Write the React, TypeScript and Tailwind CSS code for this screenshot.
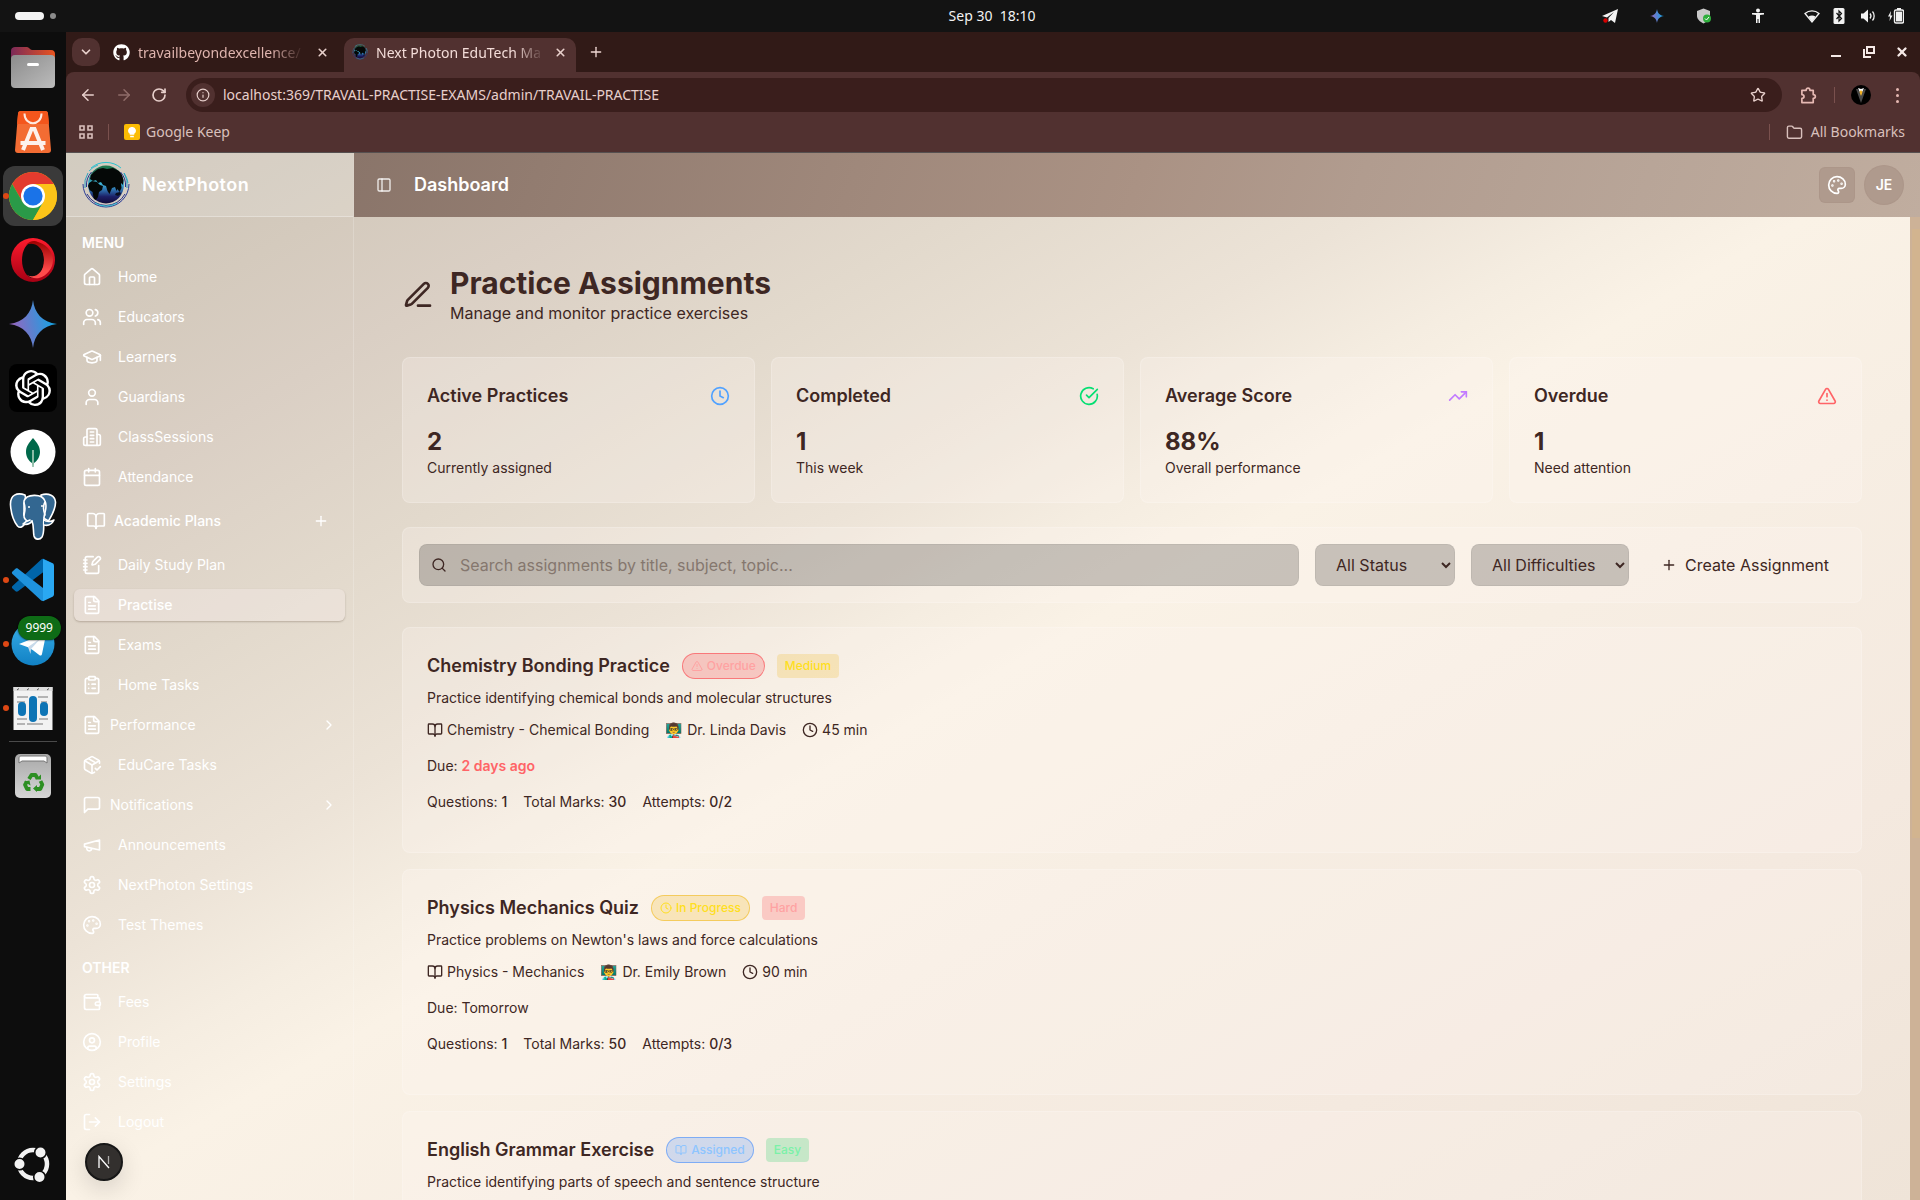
import React from "react";
import {
  House, Users, GraduationCap, User, Calendar, BookOpen, NotebookPen, ClipboardList, PackageCheck,
  Palette, Wallet, CircleUser, LogOut, PanelLeft, Plus, ChevronRight, ChevronDown, Clock,
  CircleCheckBig, TrendingUp, TriangleAlert, Search, ArrowLeft, ArrowRight, RotateCw, X, Info,
  Star, Folder,
} from "lucide-react";
import { FaGithub } from "react-icons/fa";
import { SiOpenai } from "react-icons/si";

type IconProps = { className?: string };
type IconType = React.ComponentType<{ className?: string }>;

/* ---------- line icons ---------- */

function Line({ className, paths, children }: IconProps & { paths: string[]; children?: React.ReactNode }) {
  return (
    <svg viewBox="0 0 24 24" fill="none" stroke="currentColor" strokeWidth="2" strokeLinecap="round" strokeLinejoin="round" className={className} aria-hidden="true">
      {paths.map((d) => <path key={d} d={d} />)}
      {children}
    </svg>
  );
}

const Building = ({ className }: IconProps) => (
  <Line className={className} paths={["M6 22V4a2 2 0 0 1 2-2h8a2 2 0 0 1 2 2v18Z", "M6 12H4a2 2 0 0 0-2 2v6a2 2 0 0 0 2 2h2", "M18 9h2a2 2 0 0 1 2 2v9a2 2 0 0 1-2 2h-2", "M10 6h4", "M10 10h4", "M10 14h4", "M10 18h4"]} />
);
const FileLines = ({ className }: IconProps) => (
  <Line className={className} paths={["M15 2H6a2 2 0 0 0-2 2v16a2 2 0 0 0 2 2h12a2 2 0 0 0 2-2V7Z", "M14 2v4a2 2 0 0 0 2 2h4", "M10 9H8", "M16 13H8", "M16 17H8"]} />
);
const Message = ({ className }: IconProps) => (
  <Line className={className} paths={["M21 15a2 2 0 0 1-2 2H7l-4 4V5a2 2 0 0 1 2-2h14a2 2 0 0 1 2 2z"]} />
);
const Megaphone = ({ className }: IconProps) => (
  <Line className={className} paths={["m3 11 18-5v12L3 14v-3z", "M11.6 16.8a3 3 0 1 1-5.8-1.6"]} />
);
const Gear = ({ className }: IconProps) => (
  <Line className={className} paths={["M12.22 2h-.44a2 2 0 0 0-2 2v.18a2 2 0 0 1-1 1.73l-.43.25a2 2 0 0 1-2 0l-.15-.08a2 2 0 0 0-2.73.73l-.22.38a2 2 0 0 0 .73 2.73l.15.1a2 2 0 0 1 1 1.72v.51a2 2 0 0 1-1 1.74l-.15.09a2 2 0 0 0-.73 2.73l.22.38a2 2 0 0 0 2.73.73l.15-.08a2 2 0 0 1 2 0l.43.25a2 2 0 0 1 1 1.73V20a2 2 0 0 0 2 2h.44a2 2 0 0 0 2-2v-.18a2 2 0 0 1 1-1.73l.43-.25a2 2 0 0 1 2 0l.15.08a2 2 0 0 0 2.73-.73l.22-.39a2 2 0 0 0-.73-2.73l-.15-.08a2 2 0 0 1-1-1.74v-.5a2 2 0 0 1 1-1.74l.15-.09a2 2 0 0 0 .73-2.73l-.22-.38a2 2 0 0 0-2.73-.73l-.15.08a2 2 0 0 1-2 0l-.43-.25a2 2 0 0 1-1-1.73V4a2 2 0 0 0-2-2z"]}>
    <circle cx="12" cy="12" r="3" />
  </Line>
);
const Pen = ({ className }: IconProps) => (
  <Line className={className} paths={["M12 20h9", "M16.376 3.622a1 1 0 0 1 3.002 3.002L7.368 18.635a2 2 0 0 1-.855.506l-2.872.838a.5.5 0 0 1-.62-.62l.838-2.872a2 2 0 0 1 .506-.854z"]} />
);

/* ---------- brand drawings ---------- */

function Spark({ className, id }: IconProps & { id: string }) {
  return (
    <svg viewBox="0 0 48 48" className={className} aria-hidden="true">
      <defs>
        <linearGradient id={id} x1="0" y1="0.6" x2="1" y2="0.4">
          <stop offset="0.1" stopColor="#9168c0" />
          <stop offset="0.5" stopColor="#5684d1" />
          <stop offset="0.9" stopColor="#1ba1e3" />
        </linearGradient>
      </defs>
      <path d="M24 0c1.500 13 9 22 24 24-15 2-22.500 11-24 24-1.500-13-9-22-24-24C15 22 22.500 13 24 0z" fill={`url(#${id})`} />
    </svg>
  );
}

function Globe({ className, id }: IconProps & { id: string }) {
  return (
    <svg viewBox="0 0 48 48" className={className} aria-hidden="true">
      <defs>
        <linearGradient id={id} x1="0" y1="0" x2="0" y2="1">
          <stop offset="0" stopColor="#1f7a4d" />
          <stop offset="0.2" stopColor="#1c6a5a" />
          <stop offset="0.48" stopColor="#3fb4d8" />
          <stop offset="0.68" stopColor="#2a5fa0" />
          <stop offset="0.82" stopColor="#1c1f66" />
          <stop offset="1" stopColor="#120a38" />
        </linearGradient>
      </defs>
      <g fill="none" strokeWidth="1">
        <path d="M9 7A23 23 0 0 1 39 7" stroke="#2cc3cf" />
        <path d="M7 10a22 22 0 0 1 9-6M42 12a22 22 0 0 1 4 10" stroke="#35b7c8" />
        <path d="M1 23a23 23 0 0 0 46 0" stroke="#2a3c96" />
        <path d="M3 27a21.500 21.500 0 0 1 3-15M45 27a21.500 21.500 0 0 0-3-15" stroke="#2d9fc0" />
        <path d="M5 33a21.500 21.500 0 0 0 38 0" stroke="#28308a" />
        <path d="M13 42a21 21 0 0 0 22 0" stroke="#2cc3cf" />
        <path d="M4.500 26a20 20 0 0 1 5-15M43.500 26a20 20 0 0 0-5-15" stroke="#27348c" />
      </g>
      <ellipse cx="24" cy="23.500" rx="18" ry="19" fill={`url(#${id})`} />
      <path d="M12 11l4-3 5-1 4 1 6-1 6 3 3 4 1.500 5-.5 5-2-2 .5 5-2 4-2-3-1 2-1.500-4-3 1-2.500 6-2-3-1.500-5-3-1-2-3-3 1-2-3-3 1-3-2 1-4z" fill="#050807" />
      <path d="M7 22l3-2 5 1 3 3 3 1-1 4-3 2-1 5-2 3-2-1-1.500-7-3-2-1.500-4z" fill="#050807" />
      <path d="M34 32l4-1 1 2-3 2-3-1z" fill="#0a0d20" />
    </svg>
  );
}

const FilesIcon = () => (
  <svg viewBox="0 0 48 48" className="size-12" aria-hidden="true">
    <defs>
      <linearGradient id="fl-back" x1="0" x2="1"><stop offset="0" stopColor="#7b2a58" /><stop offset="1" stopColor="#e9541f" /></linearGradient>
      <linearGradient id="fl-front" x1="0" y1="0" x2="1" y2="1"><stop offset="0" stopColor="#8c8c8c" /><stop offset="1" stopColor="#bcbcbc" /></linearGradient>
    </defs>
    <path d="M2 7c0-3 2-4 4-4h12c2 0 3 3 5 3h19c3 0 4 2 4 4v15H2z" fill="url(#fl-back)" />
    <rect x="2" y="11" width="44" height="33" rx="4" fill="url(#fl-front)" />
    <rect x="18" y="19" width="12" height="3" rx="1.500" fill="#fff" />
  </svg>
);
const SoftwareIcon = () => (
  <svg viewBox="0 0 48 48" className="size-12" aria-hidden="true">
    <path d="M9 6c0-2 1-3 3-3h24c2 0 3 1 3 3l3 36c0 2-1 3-3 3H9c-2 0-3-1-3-3z" fill="#f36c33" />
    <path d="M9 6c0-2 1-3 3-3h24c2 0 3 1 3 3l1 10H8z" fill="#f4561c" />
    <path d="M15.500 5.500c0 13 17 13 17 0" fill="none" stroke="#fde8df" strokeWidth="2" />
    <path d="M14 42l8.500-21h3L34 42M11.500 35h25" fill="none" stroke="#fdf1ec" strokeWidth="4" />
  </svg>
);
const ChromeIcon = () => (
  <svg viewBox="0 0 48 48" className="size-12" aria-hidden="true">
    <circle cx="24" cy="24" r="24" fill="#fbbc05" />
    <path d="M3.220 12A24 24 0 0 1 44.780 12H24L13.600 30z" fill="#e33b2e" />
    <path d="M3.220 12A24 24 0 0 0 24 48l10.400-18H13.600z" fill="#2a9a48" />
    <path d="M44.780 12A24 24 0 0 1 24 48l10.400-18L30 12z" fill="#fcc419" />
    <circle cx="24" cy="24" r="12" fill="#fff" />
    <circle cx="24" cy="24" r="9.600" fill="#1a73e8" />
  </svg>
);
const OperaIcon = () => (
  <svg viewBox="0 0 48 48" className="size-12" aria-hidden="true">
    <defs>
      <linearGradient id="op-a" x1="0" y1="0" x2="0" y2="1"><stop offset="0" stopColor="#ff1b2d" /><stop offset="1" stopColor="#a70014" /></linearGradient>
      <linearGradient id="op-b" x1="0" y1="0" x2="0" y2="1"><stop offset="0" stopColor="#9c0000" /><stop offset="0.800" stopColor="#ff4b4b" /></linearGradient>
    </defs>
    <path fillRule="evenodd" d="M24 2a22 22 0 1 0 0 44 22 22 0 1 0 0-44zm0 4c6 0 11 8 11 18s-5 18-11 18-11-8-11-18S18 6 24 6z" fill="url(#op-a)" />
    <path d="M17 9c3-3.500 8-5 12-3 9 3 15 10 15 18s-6 16-14 18c-4 1-9-.5-12-3 8 4 17-2 17-15S25 5 17 9z" fill="url(#op-b)" />
  </svg>
);
const OpenAiIcon = () => (
  <span className="flex size-12 items-center justify-center rounded-lg bg-black text-white"><SiOpenai className="size-9" /></span>
);
const MongoIcon = () => (
  <svg viewBox="0 0 48 48" className="size-12" aria-hidden="true">
    <circle cx="24" cy="24" r="22.500" fill="#fff" />
    <path d="M24 10c4 5 7 8 7 14 0 5-3 9-6 11l-.5 4h-1L23 35c-3-2-6-6-6-11 0-6 3-9 7-14z" fill="#00684a" />
    <path d="M24 22v17" stroke="#b8d6c4" strokeWidth="1.500" />
  </svg>
);
const PostgresIcon = () => (
  <svg viewBox="0 0 48 48" className="size-12" stroke="#fff" strokeWidth="1.600" strokeLinejoin="round" strokeLinecap="round" aria-hidden="true">
    <path d="M16 3C8 0 1 3 1.500 13c.5 7 3 16 7 21 3 3 6 0 8-3l4-6z" fill="#336791" />
    <path d="M32 3c8-2.500 14 1 14.500 7 .3 7-4 14-7 19l-7-4z" fill="#336791" />
    <path d="M15 9c2-7 18-8 21 0 3 6-1 12-1 17-1 6 1 14-2 19-2 3-7 3-8-1-1-5 0-10-2-15-6 2-9-3-8-9z" fill="#336791" />
    <path d="M23 29c-2 3-5 4-9 3 2-2 3-3 7-4M35 28c2 2 7 2 10 0-2 4-6 6-10 5" fill="#336791" />
    <path d="M15 11c2 5 1 8 0 12M36 10c-3 5-1 10 0 13" fill="none" />
    <circle cx="20" cy="15" r="1" fill="#fff" stroke="none" />
    <circle cx="33" cy="14" r="1" fill="#fff" stroke="none" />
  </svg>
);
const CodeIcon = () => (
  <svg viewBox="0 0 48 48" className="size-12" aria-hidden="true">
    <path d="M3.500 32.500l3 2.700c.8.6 1.700.6 2.500 0L45 8 35 3c-1-.5-2-.3-2.800.5L3.500 30c-.8.800-.8 1.700 0 2.500z" fill="#0065a9" />
    <path d="M3.500 15.500l3-2.700c.8-.6 1.700-.6 2.500 0L34 32v13c-.7.300-1.300 0-1.800-.4L3.500 18c-.8-.8-.8-1.700 0-2.500z" fill="#1f93dd" />
    <path d="M34 3l9.500 4.300c.9.500 1.500 1.300 1.500 2.400v28.600c0 1.100-.6 1.900-1.500 2.400L34 45.300z" fill="#2aa8f2" />
  </svg>
);
const TelegramIcon = () => (
  <svg viewBox="0 0 48 48" className="size-12" aria-hidden="true">
    <defs><linearGradient id="tg" x1="0" y1="0" x2="0" y2="1"><stop offset="0" stopColor="#38aee8" /><stop offset="1" stopColor="#1181c4" /></linearGradient></defs>
    <circle cx="24" cy="24" r="21.500" fill="url(#tg)" />
    <path d="M10 24l25-10c1.500-.5 2 .3 1.700 2L33 34c-.4 1.500-1.300 1.800-2.500 1.200l-6.500-5-5-3z" fill="#fff" />
    <path d="M19 27l13-9-10 11-.5 5z" fill="#c8daea" />
  </svg>
);
const ChartPaperIcon = () => (
  <svg viewBox="0 0 48 48" className="size-12" aria-hidden="true">
    <rect x="4.500" y="3" width="39" height="43" fill="#f2f2f2" />
    <path d="M4.500 3h39v4h-39z" fill="#dcdcdc" />
    <path d="M8 6l2-1.500M18 6l2-1.500M28 6l2-1.500M38 6l2-1.500" stroke="#555" />
    <g stroke="#b4b4b4" strokeWidth="2"><path d="M8 13h11M29 13h10M8 18h8M32 18h6M8 35h10M30 35h9M8 40h8M18 40h16" /></g>
    <rect x="9" y="18" width="8" height="14" rx="4" fill="#0d74b5" />
    <rect x="20" y="12" width="8" height="26" rx="4" fill="#0d74b5" />
    <rect x="31" y="18" width="8" height="14" rx="4" fill="#0d74b5" />
  </svg>
);
const TrashIcon = () => (
  <svg viewBox="0 0 48 48" className="size-12" aria-hidden="true">
    <defs><linearGradient id="tr" x1="0" y1="0" x2="0" y2="1"><stop offset="0" stopColor="#a8a8a8" /><stop offset="1" stopColor="#d6d6d6" /></linearGradient></defs>
    <rect x="6" y="2" width="36" height="44" rx="5" fill="url(#tr)" />
    <path d="M10 11V6c0-1 1-2 2-2h24c1 0 2 1 2 2v5l-3-2H13z" fill="#fff" stroke="#777" strokeWidth="1" />
    <g fill="none" stroke="#2c8f22" strokeWidth="3.800" strokeLinejoin="round">
      <path d="M20 27l2.500-4h4l2 3.500M31.500 29l1.800 3.500-2 4.500h-4.500M21.500 37H18l-2-4.200 2-3.300" />
    </g>
    <path d="M26.500 27.500h5.500V22.500zM28 33v7l-4-3.500zM15 29.500l5.500-1 1 5z" fill="#2c8f22" />
  </svg>
);
const UbuntuIcon = () => (
  <svg viewBox="0 0 48 48" className="size-12" aria-hidden="true">
    <circle cx="24" cy="24" r="14" fill="none" stroke="#f2f2f2" strokeWidth="4.500" />
    <g fill="#f2f2f2" stroke="#0d0d0d" strokeWidth="1.600">
      <circle cx="10.500" cy="24" r="5.800" /><circle cx="31.500" cy="12.500" r="5.800" /><circle cx="30.500" cy="37" r="5.800" />
    </g>
  </svg>
);

/* ---------- desktop ---------- */

function TopBar() {
  return (
    <header className="flex h-8 shrink-0 items-center bg-[#131313] text-[#f2f2f2]">
      <button aria-label="Workspaces" className="flex w-20 items-center gap-[6px] pl-[15px]">
        <span className="h-2 w-[29px] rounded-full bg-[#f4f4f4]" />
        <span className="size-[6px] rounded-full bg-[#8c8c8c]" />
      </button>
      <div className="flex flex-1 basis-0 justify-end" />
      <button className="pb-[2px] font-['Noto_Sans','Open_Sans',sans-serif] text-[14px] whitespace-pre">Sep 30  18:10</button>
      <div className="flex flex-1 basis-0 items-center justify-end pr-4">
        <svg viewBox="0 0 16 16" className="mr-8 size-4" aria-hidden="true"><path d="M0 8L16 1l-3 14-4-3-2.500 2V10L12 4 5 9.500z" fill="#f2f2f2" /><circle cx="3.500" cy="12.500" r="2.200" fill="#d40000" /></svg>
        <Spark className="mr-8 size-[14px]" id="spark-tray" />
        <svg viewBox="0 0 16 16" className="mr-[38px] size-4" aria-hidden="true"><path d="M1 3l6.500-2.500L14 3v5c0 3-3 6-6.500 7.500C4 14 1 11 1 8z" fill="#c9c9c9" /><circle cx="11" cy="10.500" r="4" fill="#2eae3c" /><path d="M9 10.500l1.500 1.500L13 9" fill="none" stroke="#fff" /></svg>
        <svg viewBox="0 0 16 16" className="mr-[38px] size-4" fill="#f2f2f2" aria-hidden="true"><circle cx="8" cy="2.500" r="2" /><path d="M2 5h12v1.500l-4 .5v8H8.500v-4h-1v4H6V7l-4-.5z" /></svg>
        <svg viewBox="0 0 16 16" className="mr-[11px] size-4" aria-hidden="true"><path d="M1 5.500C5 2 11 2 15 5.500L8 14z" fill="none" stroke="#f2f2f2" strokeWidth="1.300" /><path d="M4.500 8.500c2-1.500 5-1.500 7 0L8 14z" fill="#f2f2f2" /></svg>
        <svg viewBox="0 0 16 16" className="mr-[13px] size-4" aria-hidden="true"><rect x="2.500" width="11" height="16" rx="1.500" fill="#f2f2f2" /><path d="M5.500 5l5 5.500L8 13V3l2.500 2.500-5 5.500" fill="none" stroke="#131313" strokeWidth="1.200" /></svg>
        <svg viewBox="0 0 16 16" className="mr-3 size-4" aria-hidden="true"><path d="M1 5.500h2.500L8 1.500v13L3.500 10.500H1z" fill="#f2f2f2" /><path d="M10 5.500c1.200 1.500 1.200 3.500 0 5M12.500 3.500c2.200 2.500 2.200 6.500 0 9" fill="none" stroke="#f2f2f2" strokeWidth="1.300" /></svg>
        <svg viewBox="0 0 16 16" className="size-4" aria-hidden="true"><path d="M3 3L0 8.500h2L1.500 13l3-5.500h-2z" fill="#f2f2f2" /><rect x="6.500" y="2" width="9" height="13" rx="1.500" fill="none" stroke="#f2f2f2" strokeWidth="1.400" /><rect x="8" y="3.600" width="6" height="9.800" fill="#f2f2f2" /><path d="M9 0h4v2H9z" fill="#f2f2f2" /></svg>
      </div>
    </header>
  );
}

const dockApps: { name: string; icon: React.ReactNode; running?: boolean; active?: boolean; badge?: string }[] = [
  { name: "Files", icon: <FilesIcon /> },
  { name: "App Center", icon: <SoftwareIcon /> },
  { name: "Chrome", icon: <ChromeIcon />, running: true, active: true },
  { name: "Opera", icon: <OperaIcon /> },
  { name: "Gemini", icon: <Spark className="size-12" id="spark-dock" /> },
  { name: "ChatGPT", icon: <OpenAiIcon /> },
  { name: "MongoDB Compass", icon: <MongoIcon /> },
  { name: "pgAdmin", icon: <PostgresIcon /> },
  { name: "Visual Studio Code", icon: <CodeIcon />, running: true },
  { name: "Telegram", icon: <TelegramIcon />, running: true, badge: "9999" },
  { name: "Planner", icon: <ChartPaperIcon />, running: true },
];

function Dock() {
  return (
    <nav aria-label="Dock" className="flex w-[66px] shrink-0 flex-col items-center bg-[#0d0d0d] pt-1 pb-1">
      {dockApps.map((a) => (
        <button key={a.name} aria-label={a.name} className="relative flex h-16 w-full items-center justify-center">
          <span className={a.active ? "flex size-[60px] items-center justify-center rounded-xl bg-[#3a3a3a]" : "flex size-[60px] items-center justify-center"}>{a.icon}</span>
          {a.running && <span className="absolute top-[29px] left-[3px] size-[6px] rounded-full bg-[#dd4814]" />}
          {a.badge && (
            <span className="absolute top-1 right-[5px] rounded-full bg-[#0e6b16] px-2 font-['Noto_Sans','Open_Sans',sans-serif] text-[12px] leading-6 text-white shadow-[0_0_2px_#000]">{a.badge}</span>
          )}
        </button>
      ))}
      <span className="mt-px h-px w-12 bg-[#4a4a4a]" />
      <button aria-label="Trash" className="flex h-[68px] w-full items-center justify-center"><TrashIcon /></button>
      <button aria-label="Show Applications" className="mt-auto flex h-16 w-full items-center justify-center"><UbuntuIcon /></button>
    </nav>
  );
}

/* ---------- browser window ---------- */

function BrowserChrome() {
  return (
    <div className="shrink-0 bg-[#311a17] font-['Noto_Sans','Open_Sans',sans-serif] text-[14px] text-[#e8d0cc]">
      <div className="flex h-10 items-end pl-[6px]">
        <button aria-label="Search tabs" className="mb-[6px] flex size-7 items-center justify-center rounded-[10px] bg-[#513130]"><ChevronDown className="size-[14px]" strokeWidth={3} /></button>
        <div className="flex h-[34px] w-[244px] items-center pr-[14px] pb-[6px] pl-[13px]">
          <FaGithub className="mr-2 size-[17px] shrink-0 text-white" />
          <span className="flex-1 whitespace-nowrap text-[#dfb4ae] [mask-image:linear-gradient(to_right,#000_80%,transparent)]">travailbeyondexcellence/</span>
          <button aria-label="Close tab" className="ml-[10px] flex w-4 justify-center"><X className="size-[13px]" strokeWidth={3} /></button>
        </div>
        <div className="flex h-[34px] w-[232px] items-center rounded-t-[10px] bg-[#513130] pr-2 pb-[6px] pl-2">
          <Globe className="mr-2 size-4 shrink-0" id="globe-tab" />
          <span className="flex-1 whitespace-nowrap text-[#f3dcd8] [mask-image:linear-gradient(to_right,#000_82%,transparent)]">Next Photon EduTech Ma</span>
          <button aria-label="Close tab" className="ml-2 flex w-4 justify-center"><X className="size-[13px]" strokeWidth={3} /></button>
        </div>
        <button aria-label="New tab" className="mb-3 ml-3 text-[#f0d8d4]"><Plus className="size-4" /></button>
        <div className="mb-[13px] ml-auto flex items-center gap-5 pr-[11px] text-[#f5e9e7]">
          <button aria-label="Minimize" className="flex h-[10px] w-3 items-end"><span className="h-[2px] w-[10px] bg-current" /></button>
          <button aria-label="Restore"><svg viewBox="0 0 12 12" className="size-3" fill="none" stroke="currentColor" strokeWidth="2"><path d="M4 1h7v6H4zM1 3v8h7" /></svg></button>
          <button aria-label="Close window"><X className="size-[14px]" strokeWidth={4} /></button>
        </div>
      </div>
      <div className="rounded-t-lg border-b border-[#565050] bg-[#513130]">
        <div className="flex h-[46px] items-center pl-[13px]">
          <button aria-label="Back" className="mr-[18px]"><ArrowLeft className="size-[18px]" /></button>
          <button aria-label="Forward" className="mr-[18px] text-[#8f6c69]"><ArrowRight className="size-[18px]" /></button>
          <button aria-label="Reload" className="mr-[19px]"><RotateCw className="size-4" strokeWidth={2.5} /></button>
          <div className="flex h-[34px] flex-1 items-center rounded-full bg-[#3a1e1c] pr-4 pl-[5px]">
            <button aria-label="Site information" className="mr-2 flex size-6 items-center justify-center rounded-full bg-[#513130]"><Info className="size-[14px]" /></button>
            <input aria-label="Address" defaultValue="localhost:369/TRAVAIL-PRACTISE-EXAMS/admin/TRAVAIL-PRACTISE" className="min-w-0 flex-1 bg-transparent pb-[2px] text-[14px] outline-none" />
            <button aria-label="Bookmark this page"><Star className="size-4" /></button>
          </div>
          <button aria-label="Extensions" className="ml-[18px]">
            <svg viewBox="0 0 18 18" className="size-[17px]" fill="none" stroke="#e6b9b3" strokeWidth="1.800" strokeLinejoin="round"><path d="M2 3.500h4.500c0-3 4-3 4 0H14v4.500c3 0 3 4 0 4V16.500H2V12c3 0 3-4 0-4z" /></svg>
          </button>
          <span className="ml-[17px] h-4 w-px bg-[#7a514e]" />
          <button aria-label="Profile" className="ml-4 flex size-5 items-center justify-center rounded-full bg-black">
            <svg viewBox="0 0 20 20" className="size-5"><path d="M5 4l5 14 5-14-2 0-3 6-3-6z" fill="#4a4a4a" /><path d="M7 3l3 7 3-7-3 1z" fill="#fff" /><path d="M10 5l1.500 2L10 11 8.500 7z" fill="#f2b01e" /></svg>
          </button>
          <button aria-label="Menu" className="mr-[21px] ml-[25px] flex flex-col gap-[3px]">
            <span className="size-[3px] rounded-full bg-[#e6b9b3]" /><span className="size-[3px] rounded-full bg-[#e6b9b3]" /><span className="size-[3px] rounded-full bg-[#e6b9b3]" />
          </button>
        </div>
        <div className="flex h-[34px] items-start pt-1 pr-[15px] pl-[13px] text-[#d9c0bc]">
          <button aria-label="Apps" className="mt-[3px]">
            <svg viewBox="0 0 14 14" className="size-[14px]" fill="none" stroke="currentColor" strokeWidth="1.600"><path d="M1 1h4v4H1zM9 1h4v4H9zM1 9h4v4H1zM9 9h4v4H9z" /></svg>
          </button>
          <span className="mt-[2px] mr-[15px] ml-[15px] h-4 w-px bg-[#7a514e]" />
          <a href="#keep" className="flex items-center gap-[6px] leading-5">
            <span className="flex size-4 items-center justify-center rounded-xs bg-[#fbbc04]">
              <svg viewBox="0 0 10 12" className="h-[11px] w-[10px]" fill="#fff"><path d="M5 0a4 4 0 0 1 2.500 7.300V8.500h-5V7.300A4 4 0 0 1 5 0zM3 9.500h4v1.800H3z" /></svg>
            </span>
            Google Keep
          </a>
          <span className="mt-[2px] mr-4 ml-auto h-4 w-px bg-[#7a514e]" />
          <button className="flex items-center gap-2 leading-5"><Folder className="size-[17px]" />All Bookmarks</button>
        </div>
      </div>
    </div>
  );
}

/* ---------- application ---------- */

type MenuItem = { label: string; icon: IconType; kind?: "active" | "group" | "section" };

const menu: MenuItem[] = [
  { label: "Home", icon: House },
  { label: "Educators", icon: Users },
  { label: "Learners", icon: GraduationCap },
  { label: "Guardians", icon: User },
  { label: "ClassSessions", icon: Building },
  { label: "Attendance", icon: Calendar },
  { label: "Academic Plans", icon: BookOpen, kind: "section" },
  { label: "Daily Study Plan", icon: NotebookPen },
  { label: "Practise", icon: FileLines, kind: "active" },
  { label: "Exams", icon: FileLines },
  { label: "Home Tasks", icon: ClipboardList },
  { label: "Performance", icon: FileLines, kind: "group" },
  { label: "EduCare Tasks", icon: PackageCheck },
  { label: "Notifications", icon: Message, kind: "group" },
  { label: "Announcements", icon: Megaphone },
  { label: "NextPhoton Settings", icon: Gear },
  { label: "Test Themes", icon: Palette },
];
const other: MenuItem[] = [
  { label: "Fees", icon: Wallet },
  { label: "Profile", icon: CircleUser },
  { label: "Settings", icon: Gear },
  { label: "Logout", icon: LogOut },
];

function MenuEntry({ item }: { item: MenuItem }) {
  const Icon = item.icon;
  if (item.kind === "section")
    return (
      <button className="flex h-10 w-full items-center gap-2 pr-4 pl-3 font-medium">
        <Icon className="size-5" />{item.label}<Plus className="ml-auto size-4" />
      </button>
    );
  if (item.kind === "group")
    return (
      <button className="flex h-8 w-full items-center gap-2 px-2">
        <Icon className="size-5" />{item.label}<ChevronRight className="ml-auto size-4" />
      </button>
    );
  return (
    <a
      href={"#" + item.label}
      className={
        item.kind === "active"
          ? "flex h-8 items-center gap-4 rounded-md bg-[#f5ece8]/40 px-2 font-medium shadow-[0_1px_2px_rgba(60,40,20,0.25)]"
          : "flex h-8 items-center gap-4 px-2"
      }
    >
      <Icon className="size-5" />{item.label}
    </a>
  );
}

function Sidebar() {
  return (
    <aside className="flex w-72 shrink-0 flex-col border-r border-white/20 text-sm text-white">
      <div className="flex h-16 shrink-0 items-center gap-3 border-b border-white/30 bg-white/15 px-4">
        <Globe className="size-12" id="globe-side" />
        <span className="text-lg font-semibold tracking-wide">NextPhoton</span>
      </div>
      <nav className="px-2 pt-4">
        <h2 className="mb-2 px-2 leading-5 font-semibold">MENU</h2>
        <div className="flex flex-col gap-2">{menu.map((m) => <MenuEntry key={m.label} item={m} />)}</div>
        <h2 className="mt-[17px] mb-2 px-2 leading-5 font-semibold">OTHER</h2>
        <div className="flex flex-col gap-2">{other.map((m) => <MenuEntry key={m.label} item={m} />)}</div>
      </nav>
    </aside>
  );
}

const stats = [
  { title: "Active Practices", value: "2", note: "Currently assigned", icon: <Clock className="size-5 text-[#51a2ff]" /> },
  { title: "Completed", value: "1", note: "This week", icon: <CircleCheckBig className="size-5 text-[#05df72]" /> },
  { title: "Average Score", value: "88%", note: "Overall performance", icon: <TrendingUp className="size-5 text-[#c27aff]" /> },
  { title: "Overdue", value: "1", note: "Need attention", icon: <TriangleAlert className="size-5 text-[#ff6467]" /> },
];

const redTone = "bg-[#fb2c36]/20 border-[#fb2c36]/50 text-[#ffa2a2]";
const yellowTone = "bg-[#f0b100]/20 border-[#f0b100]/50 text-[#ffdf20]";
const blueTone = "bg-[#2b7fff]/20 border-[#2b7fff]/50 text-[#8ec5ff]";
const greenTone = "bg-[#00c950]/20 border-[#00c950]/50 text-[#7bf1a8]";

type Details = { topic: string; teacher: string; time: string; due: string; late?: boolean; questions: number; marks: number; attempts: string };
type Assignment = { title: string; status: string; statusIcon: IconType; statusTone: string; level: string; levelTone: string; text: string; details?: Details };

const assignments: Assignment[] = [
  {
    title: "Chemistry Bonding Practice", status: "Overdue", statusIcon: TriangleAlert, statusTone: redTone, level: "Medium", levelTone: yellowTone,
    text: "Practice identifying chemical bonds and molecular structures",
    details: { topic: "Chemistry - Chemical Bonding", teacher: "Dr. Linda Davis", time: "45 min", due: "2 days ago", late: true, questions: 1, marks: 30, attempts: "0/2" },
  },
  {
    title: "Physics Mechanics Quiz", status: "In Progress", statusIcon: Clock, statusTone: yellowTone, level: "Hard", levelTone: redTone,
    text: "Practice problems on Newton's laws and force calculations",
    details: { topic: "Physics - Mechanics", teacher: "Dr. Emily Brown", time: "90 min", due: "Tomorrow", questions: 1, marks: 50, attempts: "0/3" },
  },
  {
    title: "English Grammar Exercise", status: "Assigned", statusIcon: BookOpen, statusTone: blueTone, level: "Easy", levelTone: greenTone,
    text: "Practice identifying parts of speech and sentence structure",
  },
];

const glass = "rounded-lg border border-white/20 bg-[#fff7f3]/25";

function AssignmentCard({ a }: { a: Assignment }) {
  const StatusIcon = a.statusIcon;
  return (
    <article className={`${glass} min-h-[226px] p-6 text-sm`}>
      <div className="flex items-center gap-3">
        <h3 className="text-lg leading-7 font-semibold">{a.title}</h3>
        <span className={`flex items-center gap-1 rounded-full border px-2 py-1 text-xs leading-4 font-medium ${a.statusTone}`}>
          <StatusIcon className="size-3" />{a.status}
        </span>
        <span className={`rounded px-2 py-1 text-xs leading-4 font-medium ${a.levelTone}`}>{a.level}</span>
      </div>
      <p className="mt-2">{a.text}</p>
      {a.details && (
        <>
          <div className="mt-3 flex h-5 items-center gap-4">
            <span className="flex items-center gap-1"><BookOpen className="size-4" />{a.details.topic}</span>
            <span className="flex items-center gap-1"><span className="w-[18px]">👨‍🏫</span>{a.details.teacher}</span>
            <span className="flex items-center gap-1"><Clock className="size-4" />{a.details.time}</span>
          </div>
          <p className="mt-4">Due: <span className={a.details.late ? "font-semibold text-[#ff6467]" : ""}>{a.details.due}</span></p>
          <div className="my-4 flex gap-4">
            <span>Questions: <span className="font-medium">{a.details.questions}</span></span>
            <span>Total Marks: <span className="font-medium">{a.details.marks}</span></span>
            <span>Attempts: <span className="font-medium">{a.details.attempts}</span></span>
          </div>
        </>
      )}
    </article>
  );
}

function Dashboard() {
  return (
    <div className="flex min-w-0 flex-1 flex-col">
      <header className="flex h-16 shrink-0 items-center bg-[linear-gradient(110deg,#8a756a_0%,#927c70_12%,#9f887b_32%,#aa9284_50%,#b19c8f_64%,#b8a598_82%,#c0ad9f_100%)] pr-4 pl-4 text-white">
        <button aria-label="Toggle sidebar" className="ml-[6px]"><PanelLeft className="size-4 text-white/85" /></button>
        <h1 className="ml-[22px] text-lg font-semibold">Dashboard</h1>
        <button aria-label="Change theme" className="ml-auto flex size-9 items-center justify-center rounded-md border border-[#a58f82]/30 bg-[#af9a8d]"><Palette className="size-5" /></button>
        <button className="ml-[9px] flex size-10 items-center justify-center rounded-full border border-[#a58f82]/30 bg-[#af9a8d] text-sm font-semibold">JE</button>
      </header>
      <div className="flex min-h-0 flex-1">
        <main className="min-w-0 flex-1 overflow-hidden p-12 text-[#3e2723]">
          <div className="flex items-center gap-4">
            <Pen className="size-8" />
            <div>
              <h2 className="text-3xl leading-9 font-bold">Practice Assignments</h2>
              <p className="leading-6">Manage and monitor practice exercises</p>
            </div>
          </div>
          <section className="mt-8 grid grid-cols-4 gap-4">
            {stats.map((s) => (
              <div key={s.title} className={`${glass} p-6`}>
                <div className="flex items-center justify-between">
                  <h3 className="text-lg leading-7 font-semibold">{s.title}</h3>
                  {s.icon}
                </div>
                <p className="mt-4 text-2xl leading-8 font-bold">{s.value}</p>
                <p className="text-sm">{s.note}</p>
              </div>
            ))}
          </section>
          <form className={`${glass} mt-6 flex gap-4 p-4`} onSubmit={(e) => e.preventDefault()}>
            <div className="relative flex-1">
              <Search className="absolute top-[13px] left-3 size-4" />
              <input aria-label="Search assignments" placeholder="Search assignments by title, subject, topic..." className="h-[42px] w-full rounded-lg border border-black/5 bg-black/20 pr-4 pl-10 placeholder:text-[#85776e]" />
            </div>
            <select aria-label="Status" className="h-[42px] rounded-lg border border-black/5 bg-black/20 px-4"><option>All Status</option><option>In Progress</option></select>
            <select aria-label="Difficulty" className="h-[42px] rounded-lg border border-black/5 bg-black/20 px-4"><option>All Difficulties</option><option>Easy</option></select>
            <button className="flex items-center gap-2 px-4"><Plus className="size-4" />Create Assignment</button>
          </form>
          <section className="mt-6 flex flex-col gap-4">
            {assignments.map((a) => <AssignmentCard key={a.title} a={a} />)}
          </section>
        </main>
        <div className="flex w-[10px] shrink-0 flex-col bg-[#cdb297]">
          <div className="mt-3 ml-[2px] h-[62%] bg-[#d2b48f]" />
        </div>
      </div>
    </div>
  );
}

export default function App() {
  return (
    <div className="flex h-screen flex-col overflow-hidden bg-[#0d0d0d]">
      <TopBar />
      <div className="flex min-h-0 flex-1">
        <Dock />
        <div className="flex min-w-0 flex-1 flex-col">
          <BrowserChrome />
          <div className="relative flex min-h-0 flex-1 overflow-hidden bg-[linear-gradient(to_bottom_right,#cbc3b6_0%,#d4cabd_10%,#dacfc4_17%,#e2d9cc_27%,#ece3d7_38%,#f5ede1_45%,#faf2e6_50%,#f7eee3_62%,#f4e9df_80%,#efe4d8_100%)] font-['Inter',sans-serif]">
            <Sidebar />
            <Dashboard />
            <button aria-label="Open developer tools" className="absolute bottom-[19px] left-[19px] flex size-[38px] items-center justify-center rounded-full border-2 border-[#171717] bg-[#33302e] text-white shadow-[0_8px_24px_rgba(0,0,0,0.14)]">
              <svg viewBox="0 0 14 14" className="size-[14px]" fill="none" stroke="currentColor" strokeWidth="1.300"><path d="M2 13V1.500L12 13" /><path d="M11.500 1v8" strokeOpacity="0.600" /></svg>
            </button>
          </div>
        </div>
      </div>
    </div>
  );
}
